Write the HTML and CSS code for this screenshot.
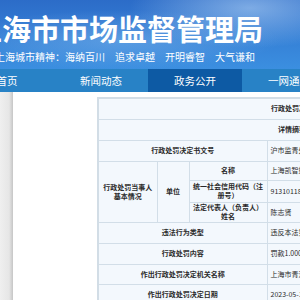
FILE: index.html
```html
<!DOCTYPE html>
<html>
<head>
	<meta charset="utf-8" />
	<title>上海市市场监督管理局</title>
	<link rel="stylesheet" href="styles.css">
</head>
<body>
	<div class="header">
		<div class="site_title">上海市市场监督管理局</div>
		<div class="slogan">上海城市精神：海纳百川<span>追求卓越</span><span>开明睿智</span><span>大气谦和</span></div>
	</div>
	<div class="nav">
		<div class="nav_item">首页</div>
		<div class="nav_item">新闻动态</div>
		<div class="nav_item active">政务公开</div>
		<div class="nav_item">一网通办</div>
	</div>
	<div class="page">
		<div class="side_shadow"></div>
		<div class="content">
			<table class="info_table">
				<colgroup>
					<col class="c1" /><col class="c2" /><col class="c3" /><col class="c4" />
				</colgroup>
				<tr class="r21"><td colspan="4" class="label">行政处罚决定</td></tr>
				<tr class="r21"><td colspan="4" class="label">详情摘要</td></tr>
				<tr class="r21"><td colspan="3" class="label">行政处罚决定书文号</td><td class="value">沪市监青处〔2023〕292023000537号</td></tr>
				<tr class="r19">
					<td rowspan="3" class="label">行政处罚当事人<br />基本情况</td>
					<td rowspan="3" class="label">单位</td>
					<td class="label">名称</td>
					<td class="value">上海凯智塑料制品有限公司</td>
				</tr>
				<tr class="r22"><td class="label">统一社会信用代码（注册号）</td><td class="value">91310118677834521X</td></tr>
				<tr class="r20"><td class="label">法定代表人（负责人）姓名</td><td class="value">陈志贤</td></tr>
				<tr class="r21"><td colspan="3" class="label">违法行为类型</td><td class="value">违反本法第四十二条规定</td></tr>
				<tr class="r21"><td colspan="3" class="label">行政处罚内容</td><td class="value">罚款1.000000万元</td></tr>
				<tr class="r20"><td colspan="3" class="label">作出行政处罚决定机关名称</td><td class="value">上海市青浦区市场监督管理局</td></tr>
				<tr class="r21"><td colspan="3" class="label">作出行政处罚决定日期</td><td class="value">2023-05-12</td></tr>
			</table>
		</div>
	</div>
</body>
</html>
```

FILE: styles.css
```css
body { margin: 0; width: 300px; height: 300px; overflow: hidden; font-family: "Noto Sans CJK SC", "Liberation Sans", sans-serif; background: #fff; }

.header { height: 69px; overflow: hidden; white-space: nowrap; color: #fff;
	background: radial-gradient(ellipse 120px 40px at 250px 8px, rgba(190,220,250,0.55), rgba(190,220,250,0)),
		radial-gradient(ellipse 160px 30px at 120px 40px, rgba(160,205,245,0.35), rgba(160,205,245,0)),
		linear-gradient(#2c6cc8, #3580d6 55%, #3b8fe0); }
.site_title { margin: 14px 0 0 -27px; font-size: 29px; line-height: 29px; font-weight: bold; letter-spacing: 0; }
.slogan { margin: 8px 0 0 -5px; font-size: 10px; line-height: 12px; }
.slogan span { margin-left: 10px; }

.nav { display: flex; height: 23px; margin-left: -40px; background: #2882c6; white-space: nowrap; }
.nav_item { flex: 0 0 94px; text-align: center; color: #fff; font-size: 10.5px; line-height: 23px; }
.nav_item.active { background: #0d5aa4; }

.page { display: flex; height: 208px; }
.side_shadow { flex: 0 0 13px; background: linear-gradient(to right, #efefef, #e6e6e6 70%, #c6c6c6); }
.content { flex: 1; padding: 5px 0 0 84px; overflow: hidden; }

.info_table { width: 390px; border-collapse: collapse; table-layout: fixed; border: 2px solid #d2dde6; font-size: 7px; line-height: 9px; color: #2a2a2a; }
.info_table td { border: 1px solid #d2dee8; background: #f3f8fd; padding: 0 3px; }
.c1 { width: 59px; }
.c2 { width: 32px; }
.c3 { width: 78px; }
.label { text-align: center; font-weight: bold; }
.value { text-align: left; padding-left: 2px; white-space: nowrap; overflow: hidden; }
.r19 { height: 19px; }
.r20 { height: 20px; }
.r21 { height: 21px; }
.r22 { height: 22px; }
```
